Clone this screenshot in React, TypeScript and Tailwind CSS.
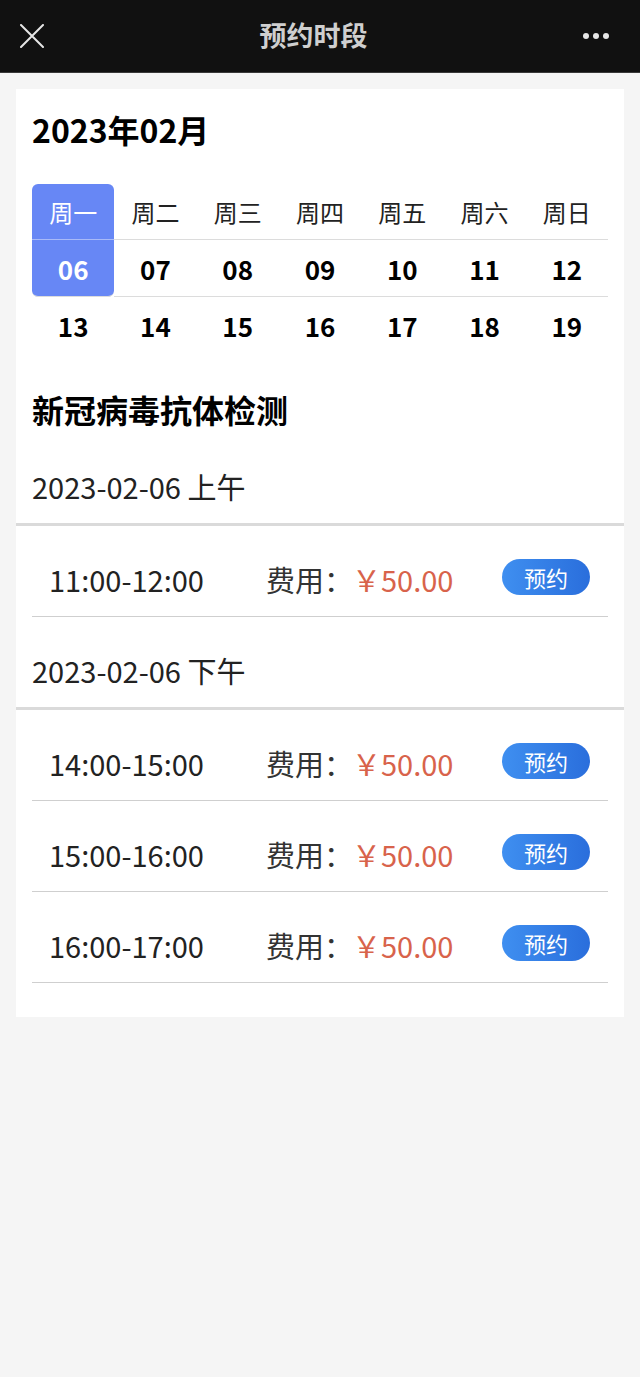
import React from 'react';

const weekDays = ['周一', '周二', '周三', '周四', '周五', '周六', '周日'];
const weeks = [
  ['06', '07', '08', '09', '10', '11', '12'],
  ['13', '14', '15', '16', '17', '18', '19'],
];

const morning = ['11:00-12:00'];
const afternoon = ['14:00-15:00', '15:00-16:00', '16:00-17:00'];

const SlotRow: React.FC<{ time: string }> = ({ time }) => (
  <div className="h-[91px] pt-[17px] flex items-center pl-[17px] pr-[18px] border-b border-[#cfcfcf]">
    <span className="w-[217px] text-[29px] text-[#222]">{time}</span>
    <span className="text-[29px] text-[#333]">费用：</span>
    <span className="text-[29px] text-[#d8634b] -ml-[1px]">￥50.00</span>
    <button className="ml-auto w-[88px] h-[36px] rounded-full bg-gradient-to-r from-[#3f8ff0] to-[#2a6edc] text-white text-[22px] leading-none flex items-center justify-center -mt-[6px]">
      预约
    </button>
  </div>
);

const Section: React.FC<{ label: string; slots: string[]; first?: boolean }> = ({ label, slots, first }) => (
  <div>
    <div className={first ? 'text-[29px] leading-[36px] text-[#222] mt-[37px]' : 'text-[29px] leading-[36px] text-[#222] mt-[35px]'}>
      {label}
    </div>
    <div className="-mx-4 mt-[19px] h-[3px] bg-[#dadada]" />
    {slots.map((t) => (
      <SlotRow key={t} time={t} />
    ))}
  </div>
);

export default function App() {
  return (
    <div className="min-h-[1377px] bg-[#f5f5f5]" style={{ fontFamily: '"Noto Sans CJK SC", "Noto Sans", sans-serif' }}>
      {/* top bar */}
      <div className="h-[73px] bg-[#111111] border-b border-[#3a3a3a] flex items-center justify-between px-[20px]">
        <svg width="24" height="24" viewBox="0 0 24 24" className="text-[#e6e6e6]">
          <path d="M1 1 L23 23 M23 1 L1 23" stroke="currentColor" strokeWidth="2" strokeLinecap="round" />
        </svg>
        <div className="text-[27px] font-bold text-[#cfcfcf] -mt-[1px]">预约时段</div>
        <div className="flex gap-[4px] pr-[12px] -mr-[1px]">
          <span className="w-[6px] h-[6px] rounded-full bg-[#e6e6e6]" />
          <span className="w-[6px] h-[6px] rounded-full bg-[#e6e6e6]" />
          <span className="w-[6px] h-[6px] rounded-full bg-[#e6e6e6]" />
        </div>
      </div>

      {/* card */}
      <div className="mx-4 mt-[16px] bg-white px-4 pb-[34px]">
        <div className="pt-[18px] text-[32px] leading-[44px] font-bold text-black">2023年02月</div>

        <div className="mt-[33px] grid grid-cols-7">
          {weekDays.map((d, i) => (
            <div
              key={d}
              className={
                i === 0
                  ? 'h-[56px] flex items-center justify-center text-[24px] text-white bg-[#6787f5] rounded-t-md border-b border-[#a9baf8]'
                  : 'h-[56px] flex items-center justify-center text-[24px] text-[#222] border-b border-[#dcdcdc]'
              }
            >
              {d}
            </div>
          ))}
          {weeks[0].map((d, i) => (
            <div
              key={d}
              className={
                i === 0
                  ? 'h-[57px] flex items-center justify-center text-[26px] font-bold text-white bg-[#6787f5] rounded-b-md border-b border-[#dcdcdc]'
                  : 'h-[57px] flex items-center justify-center text-[26px] font-bold text-black border-b border-[#dcdcdc]'
              }
            >
              {d}
            </div>
          ))}
          {weeks[1].map((d) => (
            <div key={d} className="h-[57px] flex items-center justify-center text-[26px] font-bold text-black">
              {d}
            </div>
          ))}
        </div>

        <div className="mt-[33px] text-[32px] leading-[44px] font-bold text-black">新冠病毒抗体检测</div>

        <Section label="2023-02-06 上午" slots={morning} first />
        <Section label="2023-02-06 下午" slots={afternoon} />
      </div>
    </div>
  );
}
